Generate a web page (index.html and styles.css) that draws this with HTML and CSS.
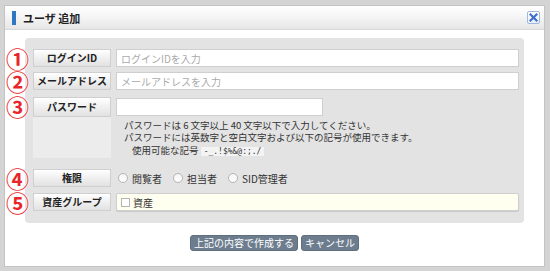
FILE: index.html
```html
<!DOCTYPE html>
<html lang="ja">
<head>
    <meta charset="UTF-8">
    <title>ユーザ 追加</title>
    <link rel="stylesheet" href="styles.css">
</head>
<body>
    <div class="dialog">
        <div class="titlebar">
            <span class="title-mark"></span>
            <span class="title">ユーザ 追加</span>
            <button class="close" type="button">
                <svg width="9" height="9" viewBox="0 0 9 9"><path d="M1.5 1.5 L7.5 7.5 M7.5 1.5 L1.5 7.5" stroke="#3d6fd0" stroke-width="2.2" stroke-linecap="square"/></svg>
            </button>
        </div>

        <div class="content">
            <div class="panel">
                <div class="row">
                    <span class="num">①</span>
                    <div class="label">ログインID</div>
                    <input class="field wide" type="text" placeholder="ログインIDを入力">
                </div>
                <div class="row">
                    <span class="num">②</span>
                    <div class="label">メールアドレス</div>
                    <input class="field wide" type="text" placeholder="メールアドレスを入力">
                </div>
                <div class="row row-tall">
                    <span class="num">③</span>
                    <div class="label-cell">
                        <div class="label">パスワード</div>
                    </div>
                    <div class="pw-box">
                        <input class="field pw" type="password">
                        <div class="help">
                            <p>パスワードは 6 文字以上 40 文字以下で入力してください。</p>
                            <p>パスワードには英数字と空白文字および以下の記号が使用できます。</p>
                            <p class="indent">使用可能な記号 <code>-_.!$%&amp;@:;./</code></p>
                        </div>
                    </div>
                </div>
                <div class="row row-role">
                    <span class="num">④</span>
                    <div class="label">権限</div>
                    <div class="radios">
                        <label><span class="radio"></span>閲覧者</label>
                        <label><span class="radio"></span>担当者</label>
                        <label><span class="radio"></span>SID管理者</label>
                    </div>
                </div>
                <div class="row">
                    <span class="num">⑤</span>
                    <div class="label">資産グループ</div>
                    <div class="check-box">
                        <label><span class="check"></span>資産</label>
                    </div>
                </div>
            </div>

            <div class="actions">
                <button class="btn" type="button">上記の内容で作成する</button>
                <button class="btn" type="button">キャンセル</button>
            </div>
        </div>
    </div>
</body>
</html>
```

FILE: styles.css
```css
body {
    margin: 0;
    background-color: #d4d4d4;
    font-family: "Noto Sans CJK JP", "Noto Sans", sans-serif;
    color: #333;
}

.dialog {
    margin: 5px 0 0 4px;
    width: 539px;
    height: 260px;
    background-color: #fff;
    border: 1px solid #c4c4c4;
}

.titlebar {
    height: 23px;
    display: flex;
    align-items: center;
    padding-left: 7px;
    background: linear-gradient(#ffffff, #f7f7f7 40%, #e6e6e6);
    border-bottom: 1px solid #d8d8d8;
}

.title-mark {
    width: 4px;
    height: 14px;
    background-color: #2f78c0;
    margin-right: 7px;
}

.title {
    font-size: 11px;
    font-weight: bold;
    color: #222;
}

.close {
    margin-left: auto;
    margin-right: 4px;
    width: 13px;
    height: 13px;
    padding: 0;
    display: flex;
    align-items: center;
    justify-content: center;
    border: 1px solid #9fb9dc;
    border-radius: 2px;
    background: linear-gradient(#ffffff, #e9eef6);
}

.content {
    padding: 8px 20px 0 20px;
}

.panel {
    background-color: #e3e3e3;
    border-radius: 4px;
    padding: 11px 5px 12px 8px;
    display: flex;
    flex-direction: column;
    gap: 5px;
}

.row {
    position: relative;
    display: flex;
    align-items: center;
    gap: 5px;
}

.num {
    position: absolute;
    left: -27px;
    top: 9px;
    transform: translateY(-50%);
    font-size: 23px;
    font-weight: bold;
    line-height: 1;
    color: #e8262a;
    text-shadow: 0 0 2px #fff, 0 0 2px #fff, 0 0 2px #fff, 0 0 1px #fff;
}

.row-role .num {
    top: 10px;
}

.label {
    width: 76px;
    height: 16px;
    flex-shrink: 0;
    border: 1px solid #cfcfcf;
    background: linear-gradient(#ffffff, #eeeeee 55%, #e2e2e2);
    font-size: 10px;
    font-weight: bold;
    line-height: 16px;
    text-align: center;
    color: #222;
}

.field {
    box-sizing: border-box;
    height: 18px;
    border: 1px solid #cfcfcf;
    background-color: #fff;
    font-family: inherit;
    font-size: 10px;
    padding: 0 4px;
    margin: 0;
}

.field::placeholder {
    color: #aaa;
}

.wide {
    flex: 1;
}

.row-tall {
    margin-top: 2px;
    align-items: stretch;
    height: 61px;
}

.label-cell {
    width: 78px;
    background-color: #ececec;
}

.label-cell .label {
    height: 18px;
    line-height: 18px;
}

.pw-box {
    display: flex;
    flex-direction: column;
}

.pw {
    width: 207px;
    margin-top: 1px;
}

.help {
    padding: 3px 0 0 8px;
    font-size: 9.5px;
    line-height: 12.5px;
    color: #333;
}

.help p {
    margin: 0;
}

.help .indent {
    padding-left: 8px;
}

.help code {
    font-family: "DejaVu Sans Mono", monospace;
    font-size: 8px;
    background-color: #f3f3f3;
    padding: 0 3px;
}

.row-role {
    margin-top: 5px;
    height: 20px;
}

.radios {
    display: flex;
    gap: 11px;
    padding-left: 2px;
    font-size: 10px;
}

.radios label {
    display: flex;
    align-items: center;
}

.radio {
    width: 8px;
    height: 8px;
    border: 1px solid #b5b5b5;
    border-radius: 50%;
    background: linear-gradient(#f4f4f4, #ffffff);
    margin-right: 4px;
}

.check-box {
    flex: 1;
    height: 18px;
    box-sizing: border-box;
    border: 1px solid #cfcfcf;
    border-radius: 2px;
    background-color: #fffff0;
    box-shadow: 0 1px 1px #c8c8c8;
    display: flex;
    align-items: center;
    padding-left: 4px;
    font-size: 10px;
}

.check-box label {
    display: flex;
    align-items: center;
}

.check {
    width: 7px;
    height: 7px;
    border: 1px solid #b5b5b5;
    background-color: #fff;
    margin-right: 3px;
}

.actions {
    display: flex;
    justify-content: center;
    gap: 3px;
    margin-top: 12px;
}

.btn {
    height: 16px;
    padding: 0 3px;
    border: 1px solid #5f6f80;
    border-radius: 3px;
    background-color: #6d7d8e;
    color: #fff;
    font-family: inherit;
    font-size: 10px;
    line-height: 14px;
}
```
